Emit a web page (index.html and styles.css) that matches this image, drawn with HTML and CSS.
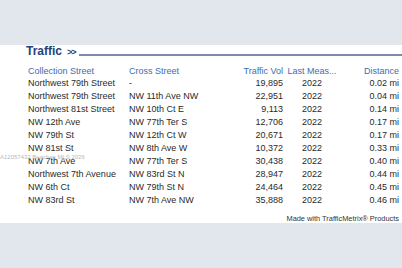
FILE: index.html
```html
<!DOCTYPE html>
<html>
<head>
<meta charset="utf-8">
<link rel="stylesheet" href="styles.css">
</head>
<body>
<div class="top-band"></div>
<section class="panel">
  <div class="title-row">
    <span class="title">Traffic</span>
    <span class="arrows">&gt;&gt;</span>
    <div class="rule"></div>
  </div>
  <div class="table">
    <div class="row head">
      <span>Collection Street</span><span>Cross Street</span><span class="num">Traffic Vol</span><span class="yr">Last Meas...</span><span class="dist">Distance</span>
    </div>
    <div class="row"><span>Northwest 79th Street</span><span>-</span><span class="num">19,895</span><span class="yr">2022</span><span class="dist">0.02 mi</span></div>
    <div class="row"><span>Northwest 79th Street</span><span>NW 11th Ave NW</span><span class="num">22,951</span><span class="yr">2022</span><span class="dist">0.04 mi</span></div>
    <div class="row"><span>Northwest 81st Street</span><span>NW 10th Ct E</span><span class="num">9,113</span><span class="yr">2022</span><span class="dist">0.14 mi</span></div>
    <div class="row"><span>NW 12th Ave</span><span>NW 77th Ter S</span><span class="num">12,706</span><span class="yr">2022</span><span class="dist">0.17 mi</span></div>
    <div class="row"><span>NW 79th St</span><span>NW 12th Ct W</span><span class="num">20,671</span><span class="yr">2022</span><span class="dist">0.17 mi</span></div>
    <div class="row"><span>NW 81st St</span><span>NW 8th Ave W</span><span class="num">10,372</span><span class="yr">2022</span><span class="dist">0.33 mi</span></div>
    <div class="row"><span>NW 7th Ave</span><span>NW 77th Ter S</span><span class="num">30,438</span><span class="yr">2022</span><span class="dist">0.40 mi</span></div>
    <div class="row"><span>Northwest 7th Avenue</span><span>NW 83rd St N</span><span class="num">28,947</span><span class="yr">2022</span><span class="dist">0.44 mi</span></div>
    <div class="row"><span>NW 6th Ct</span><span>NW 79th St N</span><span class="num">24,464</span><span class="yr">2022</span><span class="dist">0.45 mi</span></div>
    <div class="row"><span>NW 83rd St</span><span>NW 7th Ave NW</span><span class="num">35,888</span><span class="yr">2022</span><span class="dist">0.46 mi</span></div>
  </div>
  <div class="footer">Made with TrafficMetrix® Products</div>
  <div class="watermark">A12057432 Beaches MLS 2026</div>
</section>
</body>
</html>
```
FILE: styles.css
```css
html, body {
  margin: 0;
  padding: 0;
}
body {
  background: #e2e6ed;
  width: 402px;
  height: 268px;
  overflow: hidden;
  font-family: "Liberation Sans", Arial, sans-serif;
}
.top-band {
  height: 45px;
}
.panel {
  position: relative;
  background: #ffffff;
  height: 178px;
}
.title-row {
  display: flex;
  align-items: flex-start;
  height: 12px;
  padding-left: 26px;
}
.title {
  font-size: 12px;
  line-height: 12px;
  font-weight: bold;
  color: #23427e;
}
.arrows {
  font-size: 9px;
  line-height: 12px;
  font-weight: bold;
  color: #23427e;
  letter-spacing: -1px;
  margin-left: 5px;
  padding-top: 1px;
}
.rule {
  flex: 1;
  height: 9px;
  border-bottom: 2px solid #7a8cae;
  margin-left: 3px;
}
.table {
  margin-top: 7.5px;
  padding: 0 3px 0 28px;
}
.row {
  display: grid;
  grid-template-columns: 101px 110px 44px 54px 62px;
  font-size: 9px;
  line-height: 13px;
  color: #2a2a2a;
  white-space: nowrap;
}
.row.head {
  line-height: 12px;
  color: #3d6db3;
}
.num {
  text-align: right;
}
.yr {
  text-align: center;
  padding-left: 4px;
}
.dist {
  text-align: right;
}
.footer {
  margin-top: 8px;
  padding-right: 3px;
  text-align: right;
  font-size: 7.4px;
  line-height: 8px;
  color: #333333;
}
.watermark {
  position: absolute;
  left: 0;
  top: 108px;
  font-size: 6px;
  line-height: 8px;
  color: #b9b9b9;
  white-space: nowrap;
}
```
